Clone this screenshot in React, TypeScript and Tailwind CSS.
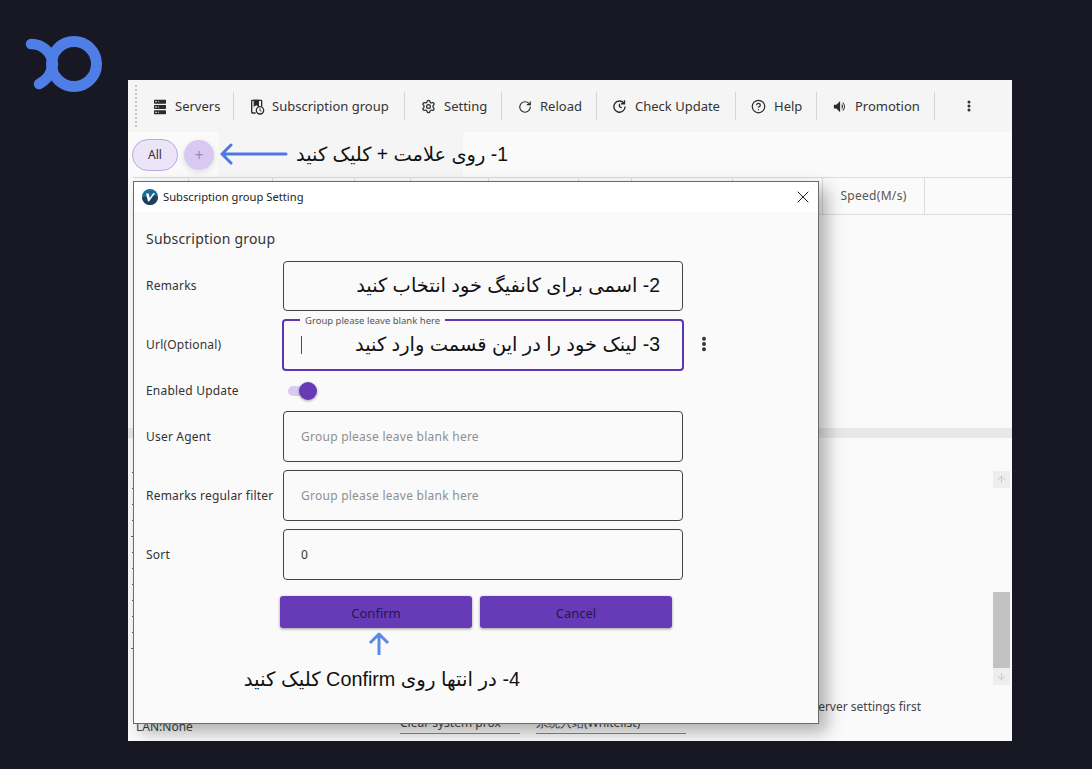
import React from 'react';
import { Settings, RotateCw, CircleHelp, X, ArrowUp, ArrowDown } from 'lucide-react';

const uiFont = "font-['Noto_Sans',sans-serif]";
const faFont = "font-['Liberation_Sans','DejaVu_Sans',sans-serif]";

function ServerIcon() {
  return (
    <svg className="w-[16px] h-[16px] fill-[#2b2b2b]" viewBox="0 0 24 24">
      <path d="M4,1H20A1,1 0 0,1 21,2V6A1,1 0 0,1 20,7H4A1,1 0 0,1 3,6V2A1,1 0 0,1 4,1M4,9H20A1,1 0 0,1 21,10V14A1,1 0 0,1 20,15H4A1,1 0 0,1 3,14V10A1,1 0 0,1 4,9M4,17H20A1,1 0 0,1 21,18V22A1,1 0 0,1 20,23H4A1,1 0 0,1 3,22V18A1,1 0 0,1 4,17M9,5H10V3H9V5M9,13H10V11H9V13M9,21H10V19H9V21M5,3V5H7V3H5M5,11V13H7V11H5M5,19V21H7V19H5Z" />
    </svg>
  );
}

function BookClockIcon() {
  return (
    <svg className="w-[16px] h-[16px]" viewBox="0 0 24 24" fill="none" stroke="#2b2b2b" strokeWidth={2}>
      <path d="M10 21H5a1 1 0 0 1-1-1V3a1 1 0 0 1 1-1h13a1 1 0 0 1 1 1v8" />
      <path d="M8 2h6v8l-3-2-3 2z" fill="#2b2b2b" />
      <circle cx="16.5" cy="17" r="5.5" fill="#f5f5f5" />
      <path d="M16.5 14v3.2l2 1.2" strokeWidth={1.5} />
    </svg>
  );
}

function CheckUpdateIcon() {
  return (
    <svg className="w-[15px] h-[15px]" viewBox="0 0 24 24" fill="none" stroke="#2b2b2b" strokeWidth={2.2}>
      <path d="M19 6.5A9 9 0 1 0 21 12" />
      <path d="M20 2v5.5h-5.5" />
      <path d="M12 7.5V12l3.5 2" />
    </svg>
  );
}

function SpeakerIcon() {
  return (
    <svg className="w-[15px] h-[15px] fill-[#2b2b2b]" viewBox="0 0 24 24">
      <path d="M3 9v6h4l6 6V3L7 9z" />
      <path d="M15.5 7.5a6 6 0 0 1 0 9z" />
      <path d="M17.5 5a9 9 0 0 1 0 14l-.9-1.3a7.4 7.4 0 0 0 0-11.4z" />
    </svg>
  );
}

function Dots({ className }: { className: string }) {
  return (
    <svg className={className} viewBox="0 0 24 24">
      <circle cx="12" cy="5" r="2.6" />
      <circle cx="12" cy="12" r="2.6" />
      <circle cx="12" cy="19" r="2.6" />
    </svg>
  );
}

function AppLogo() {
  return (
    <svg className="w-[16px] h-[16px] shrink-0" viewBox="0 0 16 16">
      <circle cx="8" cy="8" r="8" fill="#1a6a96" />
      <path d="M8 8A8 8 0 0 1 16 8 8 8 0 0 1 0 8z" fill="#1d3f5c" />
      <path d="M4 4.5h2.6l1.2 4.6 3.6-5 1.6.2-6 8.2h-1z" fill="#fff" />
    </svg>
  );
}

const toolbarItems = [
  { label: 'Servers', icon: <ServerIcon />, width: 'w-[97px]', pad: 'pl-[15px]', gap: 'gap-[7px]' },
  { label: 'Subscription group', icon: <BookClockIcon />, width: 'w-[171px]', pad: 'pl-[15px]', gap: 'gap-[7px]' },
  { label: 'Setting', icon: <Settings size={15} color="#2b2b2b" strokeWidth={2} />, width: 'w-[97px]', pad: 'pl-[16px]', gap: 'gap-[8px]' },
  { label: 'Reload', icon: <RotateCw size={14} color="#2b2b2b" strokeWidth={2} />, width: 'w-[95px]', pad: 'pl-[16px]', gap: 'gap-[8px]' },
  { label: 'Check Update', icon: <CheckUpdateIcon />, width: 'w-[139px]', pad: 'pl-[15px]', gap: 'gap-[8px]' },
  { label: 'Help', icon: <CircleHelp size={15} color="#2b2b2b" strokeWidth={2} />, width: 'w-[81px]', pad: 'pl-[15px]', gap: 'gap-[8px]' },
  { label: 'Promotion', icon: <SpeakerIcon />, width: 'w-[118px]', pad: 'pl-[15px]', gap: 'gap-[8px]' },
];

// column widths of the table behind the dialog
const columns = ['w-[56px]', 'w-[84px]', 'w-[82px]', 'w-[56px]', 'w-[78px]', 'w-[90px]', 'w-[53px]', 'w-[101px]', 'w-[90px]'];

function FormRow({ label, className, children }: { label: string; className: string; children: React.ReactNode }) {
  return (
    <div className={`flex items-center ${className}`}>
      <span className="w-[137px] text-[12px] tracking-[0.2px] text-[#333] whitespace-nowrap">{label}</span>
      {children}
    </div>
  );
}

function Field({ children }: { children: React.ReactNode }) {
  return (
    <div className="w-[400px] h-[51px] border border-[#444] rounded-[4px] flex items-center px-[17px] text-[12px]">
      {children}
    </div>
  );
}

function FormDialog() {
  return (
    <div className={`absolute left-[5px] top-[101px] w-[686px] h-[543px] bg-[#fafafa] border border-[#6b6b6b] shadow-[8px_8px_16px_rgba(0,0,0,0.3)] flex flex-col ${uiFont}`}>
      <div className="h-[30px] bg-white flex items-center pl-[8px] pr-[5px] gap-[5px] shrink-0">
        <AppLogo />
        <span className="text-[11.2px] text-[#222] flex-1">Subscription group Setting</span>
        <X size={20} color="#222" strokeWidth={1.2} />
      </div>
      <div className="pl-[12px] pt-[18px] text-[14px] tracking-[0.2px] leading-[18px] text-[#333]">Subscription group</div>
      <div className="pl-[12px] pt-[13px] flex flex-col">
        <FormRow label="Remarks" className="h-[50px]">
          <div className="w-[400px] h-[50px] border border-[#444] rounded-[4px] flex items-center justify-end pr-[22px]">
            <span dir="rtl" className={`text-[19.4px] text-[#111] whitespace-nowrap ${faFont}`}>2- اسمی برای کانفیگ خود انتخاب کنید</span>
          </div>
        </FormRow>
        <FormRow label="Url(Optional)" className="mt-[8px] h-[52px]">
          <div className="relative w-[402px] -ml-[1px] h-[52px] border-2 border-[#5e35b1] rounded-[4px] flex items-center pl-[17px] pr-[22px] justify-between">
            <span className="absolute left-[16px] -top-[6px] bg-[#fafafa] px-[5px] text-[9.5px] leading-[11px] text-[#555]">Group please leave blank here</span>
            <span className="w-px h-[18px] bg-[#5e35b1]" />
            <span dir="rtl" className={`text-[19.4px] text-[#111] whitespace-nowrap ${faFont}`}>3- لینک خود را در این قسمت وارد کنید</span>
            <Dots className="absolute -right-[31px] top-[14px] w-[18px] h-[18px] fill-[#333]" />
          </div>
        </FormRow>
        <FormRow label="Enabled Update" className="mt-[1px] h-[36px] pt-[1px]">
          <div className="relative ml-[5px] w-[26px] h-[10px] rounded-full bg-[#d9ccf0]">
            <span className="absolute -right-[3px] -top-[4px] w-[18px] h-[18px] rounded-full bg-[#673ab7] shadow-[0_1px_3px_rgba(0,0,0,0.35)]" />
          </div>
        </FormRow>
        <FormRow label="User Agent" className="mt-[3px] h-[51px]">
          <Field><span className="text-[#8f8f8f] tracking-[0.25px]">Group please leave blank here</span></Field>
        </FormRow>
        <FormRow label="Remarks regular filter" className="mt-[8px] h-[51px]">
          <Field><span className="text-[#8f8f8f] tracking-[0.25px]">Group please leave blank here</span></Field>
        </FormRow>
        <FormRow label="Sort" className="mt-[8px] h-[51px]">
          <Field><span className="text-[#333]">0</span></Field>
        </FormRow>
      </div>
      <div className="ml-[146px] mt-[16px] flex gap-[8px] text-[13px] text-[#1f1a4d]">
        <button className="w-[192px] h-[32px] pt-[3px] rounded-[3px] bg-[#673ab7] shadow-[0_1px_3px_rgba(0,0,0,0.4)]">Confirm</button>
        <button className="w-[192px] h-[32px] pt-[3px] rounded-[3px] bg-[#673ab7] shadow-[0_1px_3px_rgba(0,0,0,0.4)]">Cancel</button>
      </div>
    </div>
  );
}

export default function App() {
  return (
    <div className={`w-full h-[769px] bg-[#171823] overflow-hidden ${uiFont}`}>
      <div className="h-[80px] pl-[24px] pt-[34px]">
        <svg className="w-[80px] h-[60px]" viewBox="0 0 80 60" fill="none" stroke="#4f7fe6" strokeLinecap="round">
          <circle cx="50" cy="30" r="22.5" strokeWidth="11" />
          <path d="M7 10C19 10 28 19 29 30C28 38 23 46 15 50" strokeWidth="10.5" />
        </svg>
      </div>

      <div className="relative ml-[128px] w-[884px] h-[661px] bg-[#fafafa] flex flex-col">
        {/* toolbar */}
        <div className="h-[52px] bg-[#f5f5f5] flex items-center shrink-0 text-[13px] text-[#333]">
          <div className="ml-[7px] h-[42px] border-l-2 border-dotted border-[#c8c8c8]" />
          {toolbarItems.map((item) => (
            <div key={item.label} className={`h-[28px] pt-[1px] flex items-center border-r border-[#d6d6d6] ${item.width} ${item.pad} ${item.gap}`}>
              {item.icon}
              <span className="whitespace-nowrap">{item.label}</span>
            </div>
          ))}
          <Dots className="ml-[27px] w-[14px] h-[14px] fill-[#333]" />
        </div>

        {/* group chips */}
        <div className="h-[45px] flex shrink-0">
          <div className="w-[90px] flex items-center pl-[4px] gap-[6px]">
            <span className="w-[46px] h-[32px] rounded-full border border-[#bba9dc] bg-[#ece5f8] flex items-center justify-center text-[12px] text-[#333]">All</span>
            <span className="w-[30px] h-[30px] rounded-full bg-[#d9c8f2] flex items-center justify-center text-[16px] leading-none text-[#9a8ab0] shadow-[0_2px_6px_rgba(0,0,0,0.12)]">+</span>
          </div>
          <div className="w-[245px] bg-[#f5f5f5]" />
        </div>

        {/* table header */}
        <div className="h-[38px] flex shrink-0 ml-[5px] border-y border-[#dcdcdc] text-[12px] tracking-[0.3px] text-[#555]">
          {columns.map((w, i) => (
            <div key={i} className={`${w} border-r border-[#dcdcdc]`} />
          ))}
          <div className="w-[102px] border-r border-[#dcdcdc] flex items-center justify-center">Speed(M/s)</div>
        </div>

        <div className="h-[213px] shrink-0" />
        <div className="h-[10px] bg-[#e8e8e8] shrink-0" />

        {/* log panel */}
        <div className="flex-1 flex min-h-0 relative">
          <div className="w-[5px] flex flex-col pt-[34px] gap-[15px] items-end">
            {[...Array(12)].map((_, i) => (
              <span key={i} className={`h-px bg-[#666] ${i === 4 || i === 11 ? 'w-[2px]' : 'w-[1px]'}`} />
            ))}
          </div>
          <div className="flex-1 flex flex-col">
            <div className="flex-1" />
            <div className="h-[44px] flex text-[12px] text-[#444] shrink-0 relative">
              <div className="w-[267px] pt-[23px] pl-[3px] leading-[14px]">LAN:None</div>
              <div className="w-[120px] h-[37px] border-b border-[#888] flex items-end pb-[1px] whitespace-nowrap overflow-hidden">Clear system prox</div>
              <div className="ml-[16px] w-[150px] h-[37px] border-b border-[#888] flex items-end pb-[1px]">系统入站(Whitelist)</div>
              <div className="ml-[10px] w-[225px] pt-[1px] text-right text-[12px] text-[#444] whitespace-nowrap">Please complete server settings first</div>
            </div>
          </div>
          <div className="w-[17px] mr-[2px] flex flex-col pt-[33px] pb-[56px] shrink-0">
            <div className="h-[17px] bg-[#eeeeee] flex items-center justify-center"><ArrowUp size={11} color="#c4c4c4" /></div>
            <div className="flex-1" />
            <div className="h-[76px] bg-[#c2c2c2]" />
            <div className="h-[17px] bg-[#eeeeee] flex items-center justify-center"><ArrowDown size={11} color="#c4c4c4" /></div>
          </div>
        </div>

        <FormDialog />

        {/* annotation arrows and captions laid over the screenshot */}
        <svg className="absolute left-[91px] top-[62px] w-[70px] h-[24px]" viewBox="0 0 70 24" fill="none" stroke="#5079e0" strokeWidth="3" strokeLinecap="round" strokeLinejoin="round">
          <path d="M67 12H4M12 3L3 12L12 21" />
        </svg>
        <div dir="rtl" className={`absolute left-[127px] top-[61px] w-[253px] text-[19.4px] leading-[26px] text-[#111] whitespace-nowrap ${faFont}`}>1- روی علامت + کلیک کنید</div>
        <svg className="absolute left-[240px] top-[552px] w-[22px] h-[24px]" viewBox="0 0 22 24" fill="none" stroke="#5b8ae6" strokeWidth="3" strokeLinejoin="round">
          <path d="M11 23V2M2 11L11 2L20 11" />
        </svg>
        <div dir="rtl" className={`absolute left-[95px] top-[586px] w-[297px] text-[19.8px] leading-[26px] text-[#111] whitespace-nowrap ${faFont}`}>4- در انتها روی Confirm کلیک کنید</div>
      </div>
    </div>
  );
}
